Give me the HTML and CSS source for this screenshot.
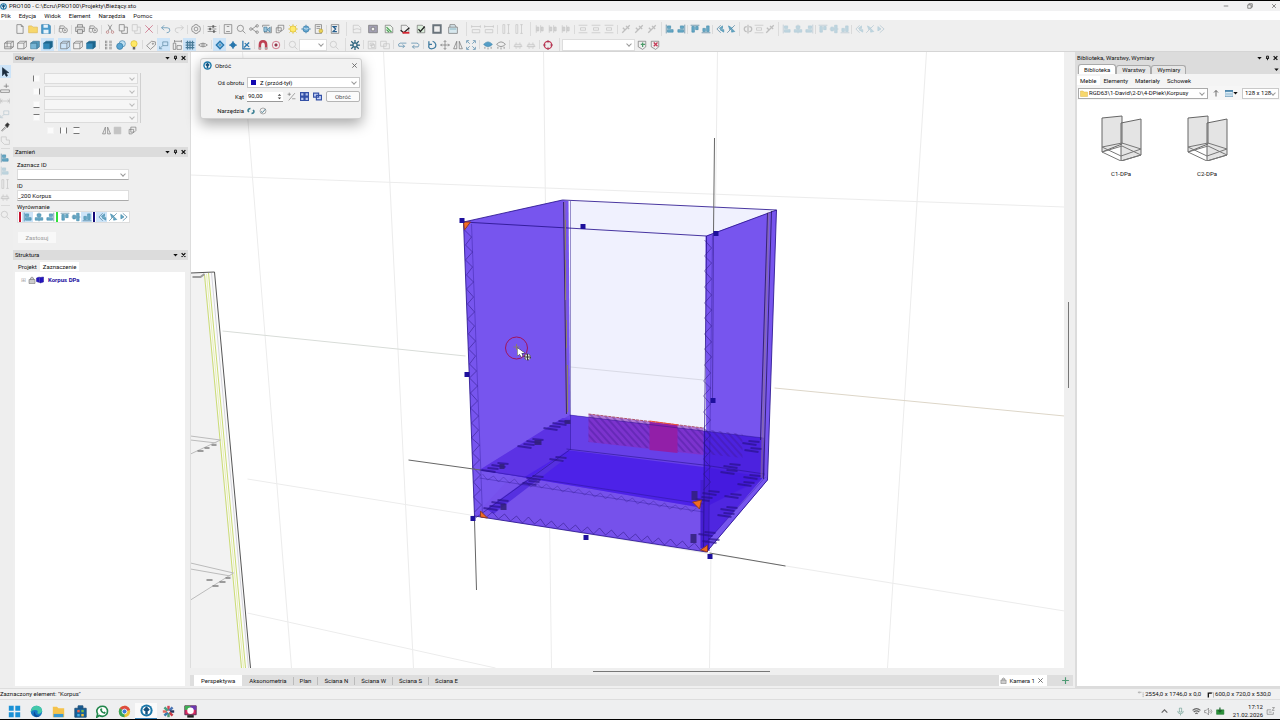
FILE: index.html
```html
<!DOCTYPE html>
<html lang="pl">
<head>
    <meta charset="UTF-8">
    <meta name="viewport" content="width=device-width, initial-scale=1.0">
    <title>PRO100 - C:\Ecru\PRO100\Projekty\Bieżący.sto</title>
    <link rel="stylesheet" href="styles.css">
</head>
<body>
    <header class="titlebar">
        <span data-icon="logo" class="app-icon"></span>
        <span class="title">PRO100 - C:\Ecru\PRO100\Projekty\Bieżący.sto</span>
        <button class="win-btn" aria-label="Minimalizuj" data-icon="minimize"></button>
        <button class="win-btn" aria-label="Przywróć" data-icon="restore"></button>
        <button class="win-btn" aria-label="Zamknij" data-icon="close"></button>
    </header>

    <nav class="menu">
        <button>Plik</button><button>Edycja</button><button>Widok</button><button>Element</button><button>Narzędzia</button><button>Pomoc</button>
    </nav>

    <section class="toolbars">
        <div class="toolbar-row" id="row1"></div>
        <div class="toolbar-row" id="row2"></div>
    </section>

    <main class="workspace">
        <aside class="rail" id="rail"></aside>

        <aside class="dock">
            <section class="panel">
                <div class="panel-head"><h2>Okleiny</h2><button aria-label="Opcje Okleiny" data-icon="down"></button><button aria-label="Przypnij Okleiny" data-icon="pin"></button><button aria-label="Zamknij Okleiny" data-icon="closeBold"></button></div>
                <div class="veneers">
                    <div class="veneer-list">
                        <label class="veneer"><span class="edge edge-left"></span><span class="select"><select disabled aria-label="Okleina lewa"><option></option></select></span></label>
                        <label class="veneer"><span class="edge edge-right"></span><span class="select"><select disabled aria-label="Okleina prawa"><option></option></select></span></label>
                        <label class="veneer"><span class="edge edge-bottom"></span><span class="select"><select disabled aria-label="Okleina dolna"><option></option></select></span></label>
                        <label class="veneer"><span class="edge edge-top"></span><span class="select"><select disabled aria-label="Okleina górna"><option></option></select></span></label>
                    </div>
                    <div class="veneer-tools">
                        <button aria-label="Bez oklein"><span class="edge"></span></button>
                        <button aria-label="Boki"><span class="edge edge-left edge-right"></span></button>
                        <button aria-label="Góra i dół"><span class="edge edge-top edge-bottom"></span></button>
                        <button class="push" aria-label="Odbij" data-icon="mirror"></button>
                        <button class="off" aria-label="Wypełnij" data-icon="fill"></button>
                        <button class="last" aria-label="Kopiuj" data-icon="copies"></button>
                    </div>
                </div>
            </section>

            <section class="panel">
                <div class="panel-head"><h2>Zamień</h2><button aria-label="Opcje Zamień" data-icon="down"></button><button aria-label="Przypnij Zamień" data-icon="pin"></button><button aria-label="Zamknij Zamień" data-icon="closeBold"></button></div>
                <form class="replace">
                    <label for="selectId">Zaznacz ID</label>
                    <span class="select"><select id="selectId"><option></option></select></span>
                    <label for="elementId">ID</label>
                    <input type="text" id="elementId" value="_200 Korpus">
                    <span class="label">Wyrównanie</span>
                    <div class="align" id="align"></div>
                    <button type="button" class="apply" disabled>Zastosuj</button>
                </form>
            </section>

            <section class="panel structure">
                <div class="panel-head"><h2>Struktura</h2><button aria-label="Opcje Struktura" data-icon="down"></button><button aria-label="Zamknij Struktura" data-icon="closeBold"></button></div>
                <div class="small-tabs"><button>Projekt</button><button class="active">Zaznaczenie</button></div>
                <ul class="tree">
                    <li><span class="expander">⊞</span><span data-icon="lock"></span><span data-icon="cabinet"></span><a href="#korpus">Korpus DPa</a></li>
                </ul>
            </section>
        </aside>

        <section class="view">
            <div class="stage">
                <svg class="scene" viewBox="190 52 874 616" preserveAspectRatio="xMidYMid slice" role="img" aria-label="Perspektywa">
                    <defs>
                        <pattern id="hatch" width="5" height="5" patternUnits="userSpaceOnUse" patternTransform="rotate(-42)">
                            <path d="M1 0V5" stroke="#3f1590" stroke-width="1"/>
                        </pattern>
                    </defs>

                    <!-- floor and wall grid -->
                    <g fill="none" stroke="#ececec" stroke-width="1">
                        <path d="M190 175L1064 207M247 479L1064 611M247 613L495 668"/>
                        <path d="M242 52L291 668M383 52L413 668M543 52L551 668M717 52L709 668M926 52L887 668"/>
                        <path d="M222 331L465 356" stroke="#d8dcd8"/>
                        <path d="M774 388L1064 416" stroke="#ddd6c8"/>
                    </g>

                    <!-- neighbouring cabinet -->
                    <path d="M190 273L205 273L242 668H190Z" fill="#f2f2f2"/>
                    <path d="M205 273L214 272L250 668H242Z" fill="#fafafa"/>
                    <g fill="none" stroke-width="1">
                        <path d="M204 275L241 668M208 273L245 668" stroke="#cbdc74"/>
                        <path d="M206 274L243 668" stroke="#e9efb5"/>
                        <path d="M211 273L248 668" stroke="#d5d5dc"/>
                        <path d="M190 273L214 272L250 668" stroke="#555"/>
                        <path d="M190 436L220 440L190 454M190 440L216 443M190 563L233 573L190 600M190 569L230 576" stroke="#bbb"/>
                    </g>
                    <path d="M192 277h8l4-3M197 451h6M204 448h5M211 445h5M206 580h6M212 586h6M219 582h6M225 578h5" stroke="#777" stroke-width="2" fill="none" opacity=".7"/>

                    <!-- back wall -->
                    <path d="M567 201L775 210L706 236L703 432L569 415Z" fill="#f0f1fe"/>
                    <path d="M570 367L703 380" stroke="#d9dae6" fill="none"/>

                    <!-- side walls -->
                    <path d="M463 222L562 200L568 201L570 450L474 516Z" fill="#7755ee"/>
                    <path d="M705 236L776 210L767 480L706 552Z" fill="#7755ee"/>

                    <!-- bottom and shelf -->
                    <path d="M569 415L703 431L765 440L767 480L706 552L474 516Z" fill="#7651eb"/>
                    <path d="M569 415L763 438L762 480L703 508L479 470Z" fill="#6740e8"/>
                    <path d="M566 450L703 467L764 477L703 508L479 470Z" fill="#4d22e8"/>
                    <path d="M479 470L562 418L570 419L570 449L524 477Z" fill="#5c32e4"/>
                    <path d="M486 509L559 456L567 457L493 514Z" fill="#5630e0"/>
                    <path d="M703 431L763 438L764 477L725 525L703 548Z" fill="#4318dc" opacity=".75"/>
                    <path d="M767 480L706 552L706 543L764 476Z" fill="#7655ee"/>
                    <path d="M700 480H709V551L700 548Z" fill="#451dd2"/>

                    <!-- plinth -->
                    <path d="M588 414L703 428L703 455L588 442Z" fill="#8a2cbc" opacity=".6"/>
                    <path d="M588 414L742 434V458L588 442Z" fill="url(#hatch)" opacity=".7"/>
                    <path d="M649 422L677 425V453L649 450Z" fill="#921fa8"/>
                    <path d="M588 414L703 428" stroke="#ae566b" fill="none" stroke-dasharray="3 1"/>
                    <path d="M649 421L678 425" stroke="#f0503c" fill="none"/>

                    <g fill="none" stroke="#29148f" stroke-width="1">
                        <path d="M463 222L562 200L776 210L767 480L706 552L474 516ZM463 222L706 236L776 210M706 236L703 550" opacity=".85"/>
                        <path d="M569 415L763 438M479 470L703 504M570 201L570 450" opacity=".45"/>
                        <path d="M566 449L703 465L764 474M475 518L569 450" opacity=".6"/>
                        <path d="M471 224L482 515M712 235L708 549M705 543L765 477M703 512L479 478" opacity=".35"/>
                    </g>
                    <g fill="none">
                        <path d="M564 202L566 414M768 212L761 478" stroke="#8c7196" stroke-width="2" opacity=".6"/>
                        <path d="M563 202L566 414M771 211L763 479M767 213L760 440" stroke="#25165c" opacity=".8"/>
                        <path d="M565 220V250M565 260V300M566 320V348M567 365V412" stroke="#8d8069"/>
                    </g>
                    <g id="edges" fill="none" stroke="#29157c" stroke-width="1"></g>

                    <g id="bolts"></g>

                    <path d="M463 222h7l-6 8zM692 502l9-2-2 9zM480 511l7 7-7-1zM707 545v7l-7-2z" fill="#f36b21" stroke="#8a3b2c" stroke-width="1"/>
                    <path d="M714 138L713 233M408 460L480 470M474 520L476 590M709 553L785 566" stroke="#666" fill="none"/>
                    <path d="M713 233L712 400" stroke="#29157c" opacity=".5" fill="none"/>
                    <g id="handles" fill="#1e109c"></g>

                    <!-- rotation centre and pointer -->
                    <circle cx="516" cy="348" r="11" fill="none" stroke="#a0145c"/>
                    <path d="M513 347h6M516 344v6" stroke="#8a7a70" fill="none"/>
                    <path d="M517 348v8l2-2 2 3 1-1-1-3h3z" fill="#fff" stroke="#333" stroke-width="1" paint-order="stroke"/>
                    <circle cx="527" cy="357" r="3" fill="#ddd" stroke="#444" stroke-dasharray="2 1"/>
                    <path d="M524 357h6M527 354v6" stroke="#333"/>
                </svg>
            </div>
            <div class="vtrack"><div class="vthumb"></div></div>
            <div class="htrack"><div class="hthumb"></div></div>
            <div class="view-tabs">
                <button class="active">Perspektywa</button>
                <button>Aksonometria</button>
                <button>Plan</button>
                <button>Ściana N</button>
                <button>Ściana W</button>
                <button>Ściana S</button>
                <button>Ściana E</button>
                <button class="camera"><span data-icon="lock"></span>Kamera 1<span data-icon="close"></span></button>
                <button class="add" aria-label="Dodaj kamerę" data-icon="plus"></button>
            </div>

            <form class="dialog" role="dialog" aria-labelledby="rotateTitle">
                <div class="dialog-head"><span data-icon="logo"></span><h2 id="rotateTitle">Obróć</h2><button type="button" aria-label="Zamknij okno" data-icon="close"></button></div>
                <div class="dialog-grid">
                    <label for="axis">Oś obrotu</label>
                    <span class="select axis"><i class="swatch"></i><select id="axis"><option>Z (przód-tył)</option></select></span>
                    <label for="angle">Kąt</label>
                    <div class="angle-row">
                        <span class="spin"><input type="text" id="angle" value="90,00"><span data-icon="spinner"></span></span>
                        <button type="button" aria-label="Zmień znak" data-icon="plusminus"></button>
                        <button type="button" aria-label="Siatka obrotu" data-icon="blueGrid"></button>
                        <button type="button" aria-label="Obróć kopię" data-icon="blueCopy"></button>
                        <button type="button" class="rotate">Obróć</button>
                    </div>
                    <span class="label">Narzędzia</span>
                    <div class="tool-row">
                        <button type="button" aria-label="Obrót wokół punktu" data-icon="cycle"></button>
                        <button type="button" aria-label="Wskaż kąt" data-icon="dial"></button>
                    </div>
                </div>
            </form>
        </section>

        <aside class="library">
            <div class="panel-head"><h2>Biblioteka, Warstwy, Wymiary</h2><button aria-label="Opcje biblioteki" data-icon="down"></button><button aria-label="Przypnij bibliotekę" data-icon="pin"></button><button aria-label="Zamknij bibliotekę" data-icon="closeBold"></button></div>
            <div class="folder-tabs"><button class="active">Biblioteka</button><button>Warstwy</button><button>Wymiary</button><span data-icon="down"></span></div>
            <div class="library-body">
                <div class="small-tabs"><button class="active">Meble</button><button>Elementy</button><button>Materiały</button><button>Schowek</button></div>
                <div class="path-row">
                    <span class="select path"><span data-icon="folder"></span><select aria-label="Folder"><option>RGD63\1-David\2-D\4-DPiek\Korpusy</option></select></span>
                    <button aria-label="W górę" data-icon="up"></button>
                    <button class="wide" aria-label="Widok listy"><span data-icon="table"></span><span data-icon="down"></span></button>
                    <span class="select size"><select aria-label="Rozmiar"><option>128 x 128</option></select></span>
                </div>
                <div class="items">
                    <figure><svg viewBox="0 0 42 46"><use href="#carcass"/></svg><figcaption>C1-DPa</figcaption></figure>
                    <figure><svg viewBox="0 0 42 46"><use href="#carcass"/></svg><figcaption>C2-DPa</figcaption></figure>
                </div>
            </div>
        </aside>
    </main>

    <footer class="status">
        <span>Zaznaczony element: "Korpus"</span>
        <span class="coords"><span data-icon="origin"></span>2554,0 x 1746,0 x 0,0</span>
        <span class="dims"><span data-icon="size"></span>600,0 x 720,0 x 530,0</span>
    </footer>

    <nav class="taskbar">
        <div class="apps" id="apps"></div>
        <div class="tray">
            <button aria-label="Ukryte ikony" data-icon="chevronUp"></button>
            <button aria-label="Mikrofon" data-icon="mic"></button>
            <button aria-label="Sieć" data-icon="wifi"></button>
            <button aria-label="Głośność" data-icon="sound"></button>
            <button aria-label="Bateria" data-icon="battery"></button>
            <time class="clock">17:12<br>21.02.2026</time>
            <button aria-label="Powiadomienia" data-icon="bell"></button>
        </div>
    </nav>

    <svg class="defs" aria-hidden="true">
        <symbol id="carcass" viewBox="0 0 42 46">
            <path d="M2 3L22 1V29L2 37ZM21 8L41 4V40L21 46Z" fill="#e4e4e4" stroke="#666"/>
            <path d="M2 32L22 28L41 34L21 41ZM2 37L21 46L41 40M2 37L22 31L41 40" fill="none" stroke="#777"/>
        </symbol>
    </svg>
    <script src="app.js"></script>
</body>
</html>
```
FILE: styles.css
```css
* {
    box-sizing: border-box;
}
body {
    margin: 0;
    height: 100vh;
    display: flex;
    flex-direction: column;
    overflow: hidden;
    border-top: 1px solid #000;
    border-bottom: 1px solid #000;
    background: #efefef;
    color: #111;
    font: 6px/8px Roboto, "Noto Sans", sans-serif;
}
button, input, select {
    font: inherit;
    color: inherit;
    border: 0;
    padding: 0;
    margin: 0;
    background: none;
    border-radius: 0;
}
button {
    display: inline-flex;
    align-items: center;
    justify-content: center;
    white-space: nowrap;
}
h2 {
    margin: 0;
    font-size: 6px;
    font-weight: 400;
}
svg {
    display: block;
}
[data-icon] {
    display: inline-flex;
    align-items: center;
    justify-content: center;
    flex: none;
}
[data-icon] > svg {
    width: 9px;
    height: 9px;
}
.defs {
    position: absolute;
    width: 0;
    height: 0;
}

/* window chrome */
.titlebar {
    height: 10px;
    flex: none;
    display: flex;
    align-items: center;
    background: #f1f1f2;
}
.app-icon > svg {
    width: 7px;
    height: 7px;
}
.title {
    flex: 1;
    padding-left: 2px;
}
.win-btn {
    width: 24px;
}
.win-btn > svg {
    width: 6px;
    height: 6px;
}
.win-btn:last-child {
    margin-right: -6px;
}
.menu {
    height: 9px;
    flex: none;
    display: flex;
    gap: 8px;
    padding-left: 1px;
    background: #fff;
}
.toolbars {
    height: 32px;
    flex: none;
    border-bottom: 1px solid #d5d5d5;
    padding-top: 2px;
}
.toolbar-row {
    display: flex;
    height: 14px;
    margin-bottom: 2px;
}
#row1 {
    padding-left: 13px;
}
#row2 {
    padding-left: 2px;
    height: 13px;
}
.bar {
    display: flex;
    align-items: center;
}
.bar + .bar {
    margin-left: 5px;
    padding-left: 2px;
    border-left: 1px solid #dcdcdc;
}
.bar + .tight {
    margin-left: 3px;
}
.tool {
    width: 13px;
    height: 13px;
}
.tool > svg {
    width: 10px;
    height: 10px;
}
.roomy .tool {
    width: 16px;
}
.tight .tool {
    width: 11px;
}
.on {
    background: #cde4f8;
}
.off {
    opacity: .35;
}
.sep {
    width: 1px;
    height: 9px;
    margin: 0 1px;
    background: #dadada;
}
.sep.wide {
    margin: 0 1px 0 2px;
}

/* drop-downs */
.select {
    position: relative;
    display: flex;
    align-items: center;
    min-width: 0;
    background: #fff;
    border: 1px solid #c9c9c9;
}
.select select {
    appearance: none;
    flex: 1;
    min-width: 0;
    width: 100%;
    height: 9px;
    padding-left: 2px;
    outline: 0;
}
.select::after {
    content: "";
    position: absolute;
    right: 3px;
    top: 2px;
    width: 3px;
    height: 3px;
    border-right: 1px solid #999;
    border-bottom: 1px solid #999;
    transform: rotate(45deg);
}
.toolbar-row .select {
    height: 12px;
    width: 28px;
    border-color: #ddd;
}
.toolbar-row .select.long {
    width: 73px;
}

/* work area */
.workspace {
    flex: 1;
    min-height: 0;
    display: flex;
}
.rail {
    width: 13px;
    flex: none;
    display: flex;
    flex-direction: column;
    padding-top: 13px;
    background: #eee;
}
.rail .tool {
    width: 12px;
    margin-left: -1px;
}
.rail .tool:first-child {
    margin-bottom: 3px;
}
.rail .sep {
    width: 9px;
    height: 1px;
    margin: 2px 1px;
}
.dock {
    width: 175px;
    flex: none;
    display: flex;
    flex-direction: column;
    gap: 4px;
    padding: 1px 0 2px;
}
.panel-head {
    display: flex;
    align-items: center;
    height: 10px;
    padding: 0 1px 0 2px;
    background: #dcdcdc;
}
.panel-head h2 {
    flex: 1;
}
.panel-head button {
    width: 8px;
}
.panel-head svg {
    width: 5px;
    height: 6px;
}
.veneers {
    height: 80px;
    padding: 10px 0 0 20px;
}
.veneer-list {
    display: flex;
    flex-direction: column;
    gap: 2px;
    width: 108px;
    border-right: 1px solid #d0d0d0;
}
.veneer {
    display: flex;
    align-items: center;
    gap: 4px;
}
.veneer .select {
    width: 94px;
    background: #f6f6f6;
    border-color: #dcdcdc;
}
.veneer .select::after {
    border-color: #bbb;
}
.edge {
    width: 7px;
    height: 7px;
    background: #fbfbfb;
    border: 1px solid #f4f4f4;
}
.edge-left {
    border-left-color: #777;
}
.edge-right {
    border-right-color: #777;
}
.edge-top {
    border-top-color: #777;
}
.edge-bottom {
    border-bottom-color: #777;
}
.veneer-tools {
    display: flex;
    align-items: center;
    padding: 3px 0 0 11px;
}
.veneer-tools button {
    width: 13px;
}
.veneer-tools .push {
    margin-left: 18px;
    width: 10px;
}
.veneer-tools .last {
    margin-left: 2px;
}
.replace {
    display: flex;
    flex-direction: column;
    align-items: flex-start;
    height: 89px;
    padding: 3px 4px;
}
.replace label, .replace .label {
    height: 9px;
    line-height: 9px;
}
.replace .select, .replace input {
    width: 112px;
    height: 11px;
    margin-bottom: 1px;
    border: 1px solid #ddd;
    border-bottom-color: #aaa;
    background: #fff;
}
.align {
    display: flex;
    align-items: center;
    height: 12px;
    background: #fff;
    border: 1px solid #ddd;
}
.align .tool {
    width: 11px;
    height: 10px;
}
.align .mark {
    width: 2px;
    height: 10px;
    margin: 0 1px;
}
.mark.red {
    background: #c8102e;
}
.mark.green {
    background: #2fe03a;
}
.mark.navy {
    background: #140a7a;
}
.apply {
    width: 38px;
    height: 11px;
    margin: 9px 0 0 1px;
    background: #f8f8f8;
    color: #999;
}
.structure {
    flex: 1;
    display: flex;
    flex-direction: column;
}
.small-tabs {
    display: flex;
    height: 12px;
    padding: 2px 0 0 2px;
}
.small-tabs button {
    padding: 0 3px;
    height: 10px;
}
.small-tabs .active {
    background: #fff;
    height: 9px;
}
.tree {
    flex: 1;
    margin: 0 3px 0 2px;
    padding: 4px 0 0 6px;
    list-style: none;
    background: #fff;
}
.tree li {
    display: flex;
    align-items: center;
}
.tree li svg {
    width: 8px;
    height: 8px;
}
.tree a {
    padding-left: 4px;
    color: #1c0f9e;
    font-weight: 700;
    text-decoration: none;
}
.expander {
    width: 7px;
    color: #aaa;
}

/* 3D view */
.view {
    position: relative;
    flex: 1;
    min-width: 0;
    margin: 0 2px;
    display: grid;
    grid-template-columns: 1fr 9px;
    grid-template-rows: 1fr 7px 11px;
    padding-bottom: 2px;
}
.stage {
    min-height: 0;
    background: #fff;
    border-left: 1px solid #ddd;
    overflow: hidden;
}
.scene {
    width: 100%;
    height: 100%;
}
.vtrack, .htrack {
    display: flex;
    align-items: center;
    justify-content: center;
    background: #efefef;
}
.vthumb {
    width: 1px;
    height: 14%;
    margin-bottom: 30px;
    background: #777;
}
.htrack {
    grid-column: 1 / 3;
}
.hthumb {
    width: 20%;
    height: 1px;
    margin-left: 100px;
    background: #777;
}
.view-tabs {
    grid-column: 1 / 3;
    display: flex;
    align-items: center;
    padding-left: 4px;
    background: #dedede;
}
.view-tabs button {
    height: 8px;
    padding: 0 6px;
    border-left: 1px solid #bbb;
}
.view-tabs .active {
    height: 11px;
    padding: 0 7px;
    border: 0;
    background: #fff;
}
.view-tabs .active + button {
    border-color: transparent;
}
.view-tabs .camera {
    height: 11px;
    margin-left: auto;
    padding: 0 3px 0 1px;
    gap: 2px;
    border: 0;
    background: #fff;
}
.view-tabs .camera svg {
    width: 7px;
    height: 7px;
}
.view-tabs .add {
    margin: 0 3px 0 14px;
    padding: 0;
    border: 0;
}

/* rotate dialog */
.dialog {
    position: absolute;
    left: 10px;
    top: 6px;
    width: 162px;
    height: 61px;
    border-radius: 3px;
    background: #f2f2f2;
    border: 1px solid #cfcfcf;
    box-shadow: 0 5px 14px rgba(0, 0, 0, .35);
}
.dialog-head {
    display: flex;
    align-items: center;
    gap: 3px;
    height: 13px;
    padding: 0 3px 0 2px;
}
.dialog-head h2 {
    flex: 1;
}
.dialog-head button > svg {
    width: 7px;
    height: 7px;
}
.dialog-grid {
    display: grid;
    grid-template-columns: 43px 1fr;
    grid-auto-rows: 11px;
    gap: 3px 3px;
    align-items: center;
    padding: 5px 4px 0 0;
}
.dialog-grid label, .dialog-grid .label {
    text-align: right;
}
.axis {
    height: 11px;
}
.swatch {
    width: 5px;
    height: 5px;
    margin: 0 2px 0 3px;
    background: #1208b0;
}
.angle-row, .tool-row {
    display: flex;
    align-items: center;
    gap: 4px;
}
.angle-row {
    height: 11px;
}
.spin {
    display: flex;
    width: 36px;
    height: 10px;
    background: #fff;
    border-bottom: 1px solid #999;
}
.spin input {
    flex: 1;
    min-width: 0;
    padding-left: 1px;
}
.spin svg {
    width: 7px;
}
.rotate {
    width: 34px;
    height: 11px;
    margin-left: auto;
    border: 1px solid #b5b5b5;
    border-radius: 2px;
    background: #fbfbfb;
    color: #555;
}
.tool-row svg {
    width: 8px;
    height: 8px;
}

/* library */
.library {
    width: 205px;
    flex: none;
    display: flex;
    flex-direction: column;
    padding: 1px 0 2px;
    background: #dcdcdc;
}
.folder-tabs {
    display: flex;
    align-items: flex-end;
    height: 11px;
    padding: 0 1px 0 3px;
}
.folder-tabs button {
    height: 9px;
    padding: 0 5px;
    border: 1px solid #aaa;
    border-bottom: 0;
    border-radius: 3px 3px 0 0;
    background: #e6e6e6;
}
.folder-tabs .active {
    height: 10px;
    background: #fff;
}
.folder-tabs [data-icon] {
    margin-left: auto;
}
.folder-tabs svg {
    width: 5px;
}
.library-body {
    flex: 1;
    margin-left: 2px;
    background: #fff;
}
.library .small-tabs {
    padding-left: 0;
    background: #f4f4f4;
}
.library .small-tabs button {
    padding: 0 4px 0 3px;
}
.path-row {
    display: flex;
    align-items: center;
    gap: 4px;
    height: 14px;
    padding: 0 1px;
    background: #f6f6f6;
}
.path {
    width: 130px;
    height: 11px;
    padding-left: 1px;
    border-color: #aaa;
}
.path select {
    padding-left: 1px;
}
.path-row svg {
    width: 8px;
}
.path-row .wide {
    margin-left: 1px;
}
.path-row .wide [data-icon="down"] svg {
    width: 5px;
    height: 6px;
}
.size {
    flex: 1;
    height: 11px;
}
.items {
    display: grid;
    grid-template-columns: 86px 86px;
    padding-top: 15px;
}
.items figure {
    margin: 0;
    display: flex;
    flex-direction: column;
    align-items: center;
    gap: 9px;
    padding-left: 2px;
}
.items svg {
    width: 42px;
    height: 46px;
}

/* bottom bars */
.status {
    flex: none;
    display: flex;
    align-items: center;
    gap: 6px;
    height: 11px;
    padding-right: 9px;
    border-top: 1px solid #ddd;
    background: #f1f1f1;
}
.coords {
    margin-left: auto;
}
.coords, .dims {
    display: flex;
    align-items: center;
    gap: 1px;
}
.status svg {
    width: 7px;
    height: 7px;
}
.taskbar {
    flex: none;
    display: flex;
    justify-content: space-between;
    height: 20px;
    padding-left: 3px;
    border-top: 1px solid #ddd;
    background: #eeeff0;
}
.apps {
    display: flex;
    align-items: center;
    padding-top: 3px;
}
.apps button {
    width: 22px;
    height: 16px;
}
.apps .tool > svg {
    width: 13px;
    height: 13px;
}
.apps .current {
    background: #fafafa;
    border-bottom: 1px solid #3b82b5;
}
.tray {
    display: flex;
    align-items: center;
    gap: 3px;
    padding: 3px 5px 0 0;
}
.tray button:first-child, .tray button:nth-child(2) {
    margin-right: 4px;
}
.clock {
    width: 32px;
    margin-left: 3px;
    text-align: right;
}
```
FILE: app.js
```js
// 16x16 drawings, stroked in the current colour unless they say otherwise
const icons = {
    logo: '<circle cx="8" cy="8" r="7.5" fill="#1976a8" stroke="none"/><circle cx="8" cy="8" r="5" fill="#fff" stroke="none"/><path d="M8 13V7M5 8L8 5L11 8" stroke="#14527e" stroke-width="3"/>',
    minimize: '<path d="M2 8h12" stroke-width="2"/>',
    restore: '<path d="M2 5h9v9H2zM5 5V2h9v9h-3" stroke-width="2"/>',
    close: '<path d="M3 3l10 10M13 3L3 13" stroke-width="2"/>',
    closeBold: '<path d="M2 2l12 12M14 2L2 14" stroke="#111" stroke-width="4"/>',
    down: '<path d="M1 5h14l-7 8z" fill="#111" stroke="none"/>',
    pin: '<path d="M3 9h10M5 9V2h6v7M8 9v6" stroke="#111" stroke-width="3"/>',
    doc: '<path d="M3 1h7l3 3v11H3zM10 1v3h3"/>',
    folder: '<path d="M1 3h5l2 2h7v9H1z" fill="#f7d76c" stroke="#dcb44c"/>',
    save: '<path d="M1 1h12l2 2v12H1z" fill="#4b9ccc" stroke="#2678ac"/><path d="M4 1h7v5H4zM4 15V9h8v6" fill="#e7f3fb" stroke="none"/>',
    printPreview: '<path d="M3 7V3h6l2 2M2 13V7h7M3 13h3"/><circle cx="11" cy="10" r="4"/><circle cx="11" cy="10" r="1"/>',
    print: '<path d="M4 5V1h8v4M4 12H1V5h14v7h-3M4 9h8v6H4z" fill="#ddd"/>',
    scissors: '<path d="M5 1l6 10M11 1L5 11"/><circle cx="4" cy="13" r="2" stroke="#b36a6a"/><circle cx="12" cy="13" r="2" stroke="#b36a6a"/>',
    copy: '<path d="M2 1h8v10H2zM6 11v4h9V5h-5" />',
    cross: '<path d="M2 2l12 12M14 2L2 14" stroke="#c44e6c"/>',
    undo: '<path d="M5 2L1 6l4 4M1 6h9q5 0 4 5q-1 3-5 3" stroke="#3d7ea6"/>',
    redo: '<path d="M11 2l4 4-4 4M15 6H6q-5 0-4 5q1 3 5 3"/>',
    gear: '<path d="M6 1h4l1 2 3 1 1 4-1 4-3 1-1 2H6l-1-2-3-1-1-4 1-4 3-1z"/><circle cx="8" cy="8" r="3"/>',
    sliders: '<path d="M1 4h14M1 8h14M1 12h14"/><path d="M10 2v4M5 6v4M11 10v4" stroke-width="3"/>',
    book: '<path d="M2 1h12v14H2zM5 12h6M6 4h4"/>',
    zoom: '<circle cx="7" cy="7" r="5"/><path d="M11 11l4 4"/>',
    share: '<path d="M5 8l7-5M5 8l7 5"/><circle cx="3" cy="8" r="2"/><circle cx="13" cy="3" r="2"/><circle cx="13" cy="13" r="2"/>',
    photo: '<path d="M1 5V2h11M15 4v10H4v-3"/><path d="M3 12V5h5v7zM8 9l5-4v8z" fill="#9cc5dc" stroke="#387395"/>',
    copies: '<path d="M5 2h9v6l-3 3H5zM2 6h8v5l-3 3H2z"/>',
    sun: '<path d="M8 0v16M0 8h16M2 2l12 12M14 2L2 14" stroke="#d8bd38"/><circle cx="8" cy="8" r="5" fill="#ffea6d" stroke="#d7b620"/>',
    globe: '<path d="M0 8h16M8 1v14" stroke="#427fab"/><circle cx="8" cy="8" r="5" fill="#67a8d1" stroke="#286e9c"/><path d="M4 6q4 4 8 1" stroke="#fff"/>',
    report: '<path d="M2 1h10v14H2zM4 4h6M4 7h6"/><circle cx="11" cy="11" r="3" fill="#ead35a" stroke="#b99f35"/>',
    sum: '<path d="M2 1h12v14H2z"/><path d="M11 4H5l4 4-4 4h6" stroke="#265e8d" stroke-width="2"/>',
    sheet: '<path d="M2 14V2h8l4 4v8z"/><path d="M2 9q6-3 12 0"/>',
    sheetPhoto: '<path d="M1 2h14v12H1z" fill="#a3a0b3"/><circle cx="8" cy="8" r="3" fill="#eee"/>',
    sheetGreen: '<path d="M2 14V2h8l4 4v8z" fill="#eaf4e9"/><path d="M4 5l8 8M4 9l4 4" stroke="#48a052" stroke-width="2"/>',
    sheetRed: '<path d="M2 12V2h8l4 4v6"/><path d="M1 10l5 4 9-8" stroke="#222" stroke-width="2"/><path d="M4 14h11" stroke="#d52631" stroke-width="3"/>',
    sheetCheck: '<path d="M2 14V2h8l4 4v8z" fill="#dcefdc"/><path d="M4 8l3 4 7-8" stroke="#222" stroke-width="2"/>',
    square: '<path d="M2 2h12v12H2z" stroke-width="3" stroke="#69737b"/>',
    archive: '<path d="M1 5h14v10H1zM3 5V1h8l2 4" fill="#d8e8ee"/><path d="M3 8h10" stroke="#5797ab"/>',
    distH: '<path d="M1 2v4M15 2v4M1 4h14M2 9h12v5H2z"/>',
    distV: '<path d="M3 1v14h3V1zM12 1v14M10 1h4M10 15h4"/>',
    flow: '<path d="M2 2v12M9 2v12M3 5h3v6H3zM10 5h3v6h-3z" fill="#aaa"/>',
    stack: '<path d="M1 2h14M1 14h14M4 6h8v4H4z"/>',
    diag: '<path d="M2 14L14 2M3 6l4 4M8 3l5 5" stroke-width="2"/>',
    ring: '<path d="M8 1v14M6 4Q2 4 2 8t4 4M10 4q4 0 4 4t-4 4" stroke-width="2"/>',
    alL: '<path d="M2 1v14" stroke="#346f90"/><path d="M4 3h5v4H4zM4 9h9v4H4z" fill="#68a9c6" stroke="#438cad"/>',
    alC: '<path d="M8 1v14" stroke="#346f90"/><path d="M5 3h6v4H5zM2 9h12v4H2z" fill="#68a9c6" stroke="#438cad"/>',
    alR: '<path d="M14 1v14" stroke="#346f90"/><path d="M7 3h5v4H7zM3 9h9v4H3z" fill="#68a9c6" stroke="#438cad"/>',
    alT: '<path d="M1 2h14" stroke="#346f90"/><path d="M3 4h4v9H3zM9 4h4v5H9z" fill="#68a9c6" stroke="#438cad"/>',
    alM: '<path d="M1 8h14" stroke="#346f90"/><path d="M3 5h4v6H3zM9 2h4v12H9z" fill="#68a9c6" stroke="#438cad"/>',
    alB: '<path d="M1 14h14" stroke="#346f90"/><path d="M3 7h4v5H3zM9 3h4v9H9z" fill="#68a9c6" stroke="#438cad"/>',
    alF: '<path d="M9 2L3 8l6 6" stroke="#346f90"/><path d="M7 7l5-4v4zM8 9l6 4V9z" fill="#68a9c6" stroke="#438cad"/>',
    alX: '<path d="M2 14L14 2" stroke="#346f90"/><path d="M4 3l5 3-3 3zM9 7l5 5-5 1z" fill="#68a9c6" stroke="#438cad"/>',
    alK: '<path d="M6 2l7 6-7 6" stroke="#346f90"/><path d="M3 4l5 4-5 3z" fill="#68a9c6" stroke="#438cad"/>',
    wire: '<path d="M1 5h10v9H1zM1 5l4-3h10v9l-4 3M11 5l4-3M5 2v9H1M5 11h10"/>',
    box: '<path d="M1 5h10v9H1zM1 5l4-3h10v9l-4 3M11 5l4-3"/>',
    boxBlue: '<path d="M1 5h10v9H1z" fill="#79b6d5" stroke="#42809f"/><path d="M1 5l4-3h10v9l-4 3V5z" fill="#529abd" stroke="#3f718d"/>',
    boxFull: '<path d="M1 5h10v9H1z" fill="#3187b6" stroke="#2477a4"/><path d="M1 5l4-3h10v9l-4 3V5z" fill="#19658f" stroke="#26688c"/>',
    edges: '<path d="M4 1v14M6 1v14M11 1v14M13 1v14" stroke-dasharray="4 1"/>',
    spheres: '<circle cx="10" cy="6" r="5" fill="#bedff1" stroke="#397fac"/><circle cx="6" cy="10" r="5" fill="#5aa4d1" stroke="#25729f"/>',
    bulb: '<circle cx="8" cy="6" r="5" fill="#ffe866" stroke="#d7b825"/><path d="M6 12h4M6 14h4" stroke-width="2"/>',
    tag: '<path d="M1 9l8-7 6 1v5l-8 7z"/><circle cx="11" cy="6" r="1"/>',
    dims: '<path d="M1 14l5-5M1 10v4h4M6 3h8v6H6z" stroke="#507d98"/>',
    measures: '<path d="M2 15V5h4v10zM8 9h7v6H8zM4 2h11M4 0v4M15 0v4"/>',
    grid: '<path d="M1 4h14M1 8h14M1 12h14M4 1v14M8 1v14M12 1v14" stroke="#4a7c99" stroke-width="2"/>',
    eye: '<path d="M1 8q7-6 14 0q-7 6-14 0z"/><circle cx="8" cy="8" r="2"/>',
    diamond: '<path d="M8 2l6 6-6 6-6-6z" fill="#7dbde8" stroke="#2876ad" stroke-width="2"/><circle cx="8" cy="8" r="1" fill="#fff"/>',
    diamond2: '<path d="M8 2v12M2 8h12M8 4l4 4-4 4-4-4z" stroke="#2876ad" stroke-width="2"/>',
    origin3: '<path d="M3 1v13h12M5 12l8-8M6 5l7 6" stroke="#2876ad" stroke-width="2"/>',
    magnet: '<path d="M3 15V8q0-6 5-6t5 6v7" stroke="#bd4053" stroke-width="4"/><path d="M1 13h4M11 13h4" stroke="#aaa" stroke-width="3"/>',
    target: '<circle cx="8" cy="8" r="6" stroke="#c33855"/><circle cx="8" cy="8" r="2" fill="#923448" stroke="#923448"/>',
    crosshair: '<circle cx="8" cy="8" r="6" stroke="#c33855" stroke-width="2"/><path d="M8 0v5M8 11v5M0 8h5M11 8h5" stroke="#8b2845"/>',
    selectAll: '<path d="M2 2l3 3M14 2l-3 3M2 14l3-3M14 14l-3-3M8 0v4M8 12v4M0 8h4M12 8h4M5 5h6v6H5z" stroke="#28617c" stroke-width="2"/>',
    group: '<path d="M2 2h12v12H2zM5 5h5v4H5zM7 7h5v5H7z"/>',
    ungroup: '<path d="M1 2h9v8H1zM6 6h9v8H6z"/>',
    turnL: '<path d="M15 5H5q-4 1-2 5h9M9 7l3 3-3 3" stroke="#3c799f"/>',
    turnR: '<path d="M2 5h9q5 1 2 6H4M7 8l-3 3 3 3" stroke="#3c799f"/>',
    rotate: '<path d="M3 2v5h5M4 6q-4 8 4 8q7-1 6-7q-1-4-5-5" stroke="#3c799f" stroke-width="2"/>',
    move: '<path d="M8 1v14M1 8h14M6 3l2-2 2 2M6 13l2 2 2-2M3 6L1 8l2 2M13 6l2 2-2 2"/>',
    mirror: '<path d="M6 2v12H1zM10 2v12h5z"/>',
    scale: '<path d="M1 5V1h4M11 1h4v4M15 11v4h-4M5 15H1v-4M2 2l4 4M14 2l-4 4M2 14l4-4M14 14l-4-4" stroke="#3c799f"/>',
    eyeBlue: '<path d="M1 7q7-8 14 0q-7 7-14 0z" fill="#549dc6" stroke="#3b83ab"/><path d="M3 11v3M8 12v3M13 11v3"/>',
    eyeShut: '<path d="M1 7q7-8 14 0q-7 7-14 0zM3 11v3M8 12v3M13 11v3"/>',
    lamp: '<path d="M3 7h10v4H3zM5 7V4M11 7V4M1 10h14M5 12v2M11 12v2"/>',
    camAdd: '<path d="M2 2h12v9l-5 4-7-4z"/><path d="M6 7h7M9 4v7" stroke="#4c9b69" stroke-width="2"/>',
    camDel: '<path d="M2 2h12v9l-5 4-7-4z"/><path d="M6 4l6 6M12 4l-6 6" stroke="#c53855" stroke-width="2"/>',
    arrow: '<path d="M4 1v13l3-4 3 5 2-1-2-5h4z" fill="#1b2c3d" stroke="#1b2c3d"/>',
    insert: '<path d="M1 11h14v4H1zM10 1v7M6 5h8"/>',
    span: '<path d="M1 4v8M15 4v8M1 8h14M4 6L1 8l3 2M12 6l3 2-3 2"/>',
    picker: '<path d="M2 14l7-7M3 15l8-7"/><path d="M8 5l4 4 3-5-3-3z" fill="#333"/>',
    shape: '<path d="M2 3h8v5h5v7H7l-5-5z"/>',
    fill: '<path d="M2 2h12v12H2z" fill="#777"/>',
    lock: '<path d="M2 7h12v8H2zM5 7V4q3-4 6 0v3" fill="#ccc"/>',
    cabinet: '<path d="M1 4l6-2v11l-6-2zM8 3l7-1v10l-7 2z" fill="#2415c0" stroke="#1d1092"/>',
    plus: '<path d="M8 2v12M2 8h12" stroke="#4e9a74" stroke-width="2"/>',
    spinner: '<path d="M4 6l4-4 4 4zM4 10l4 4 4-4z" fill="#444" stroke="none"/>',
    plusminus: '<path d="M1 4h6M4 1v6M14 2L3 15M9 12h6"/>',
    blueGrid: '<path d="M1 1h6v6H1zM9 1h6v6H9zM1 9h6v6H1zM9 9h6v6H9z" fill="#b9c6ee" stroke="#3451a6" stroke-width="2"/>',
    blueCopy: '<path d="M1 2h9v7H1zM6 6h9v8H6z" fill="#c9d6fa" stroke="#3451a6" stroke-width="2"/>',
    cycle: '<path d="M7 3Q2 3 2 8l2 2M9 13q5 0 5-5l-2-2" stroke="#3c8094" stroke-width="3"/>',
    dial: '<circle cx="8" cy="8" r="6"/><path d="M4 9l3 2 6-7" stroke="#578798" stroke-width="2"/>',
    up: '<path d="M8 14V2M4 6l4-4 4 4" stroke-width="2"/>',
    table: '<path d="M0 2h16v12H0z" fill="#dcedf7" stroke="#3978a3"/><path d="M0 3h16" stroke="#3978a3" stroke-width="3"/><path d="M4 7v5M8 7v5M12 7v5" stroke="#3978a3"/>',
    origin: '<path d="M2 3h9M14 3v12M5 1v5" stroke-dasharray="3 1"/>',
    size: '<path d="M5 4h10v11"/><path d="M3 15V5h8" stroke="#111" stroke-width="3"/>',
    chevronUp: '<path d="M3 10l5-5 5 5" stroke-width="2"/>',
    mic: '<path d="M6 2h4v7H6zM3 7q0 5 5 5t5-5M8 12v3" stroke="#579083"/>',
    wifi: '<path d="M1 6q7-6 14 0M3 9q5-4 10 0M6 12q2-2 4 0" stroke-width="2"/>',
    sound: '<path d="M1 6h3l4-4v12l-4-4H1zM10 6q2 2 0 4M12 4q4 4 0 8"/>',
    battery: '<path d="M1 5h13v8H1z" fill="#2c923a" stroke="#227832"/><path d="M7 1v8M4 6l3 3 3-3" stroke="#195d29" stroke-width="2"/>',
    bell: '<path d="M2 13V5h7M2 13h11V9M5 9h5M11 1h4l-4 5h4"/>',
    windows: '<path d="M1 1h6v6H1zM9 1h6v6H9zM1 9h6v6H1zM9 9h6v6H9z" fill="#1b91d5" stroke="none"/>',
    edge: '<circle cx="8" cy="8" r="7" fill="#1779c5" stroke="none"/><path d="M1 7Q3 0 9 1q6 1 6 7q-2 4-6 2q2-4-3-4-4 0-5 3z" fill="#42c8a9" stroke="none"/><path d="M6 8q0 6 7 5q-3 3-7 1Q3 11 6 8z" fill="#0b4e99" stroke="none"/>',
    explorer: '<path d="M1 2h5l2 2h7v11H1z" fill="#f5c34c" stroke="none"/><path d="M2 11h12v4H2z" fill="#3b99d4" stroke="none"/>',
    store: '<path d="M1 4h14v11H1zM5 4V1h6v3" fill="#15609a" stroke="#204d75"/><path d="M4 6h3v3H4z" fill="#ef6248" stroke="none"/><path d="M9 6h3v3H9z" fill="#83b943" stroke="none"/><path d="M4 11h3v3H4z" fill="#42aee4" stroke="none"/><path d="M9 11h3v3H9z" fill="#f3bd36" stroke="none"/>',
    whatsapp: '<path d="M1 15l1-4q-3-6 3-9 7-2 9 4 1 7-6 8-2 0-4-1z" fill="#fff" stroke="#21864c" stroke-width="2"/><path d="M5 5q0 5 6 6l1-2-2-1-1 1-2-3 1-1-1-1z" fill="#21864c" stroke="none"/>',
    chrome: '<circle cx="8" cy="8" r="7" fill="#e9c43a" stroke="none"/><path d="M8 8L2 4Q5 0 10 1q4 2 5 5z" fill="#dd4b3f" stroke="none"/><path d="M8 8l0 7Q1 15 1 8q0-2 1-4z" fill="#37a35a" stroke="none"/><circle cx="8" cy="8" r="3" fill="#3b7ddc" stroke="#fff"/>',
    pinwheel: '<g stroke-width="3"><path d="M8 7V1" stroke="#d14453"/><path d="M9 7l4-4" stroke="#4974b3"/><path d="M10 8h5" stroke="#26345c"/><path d="M9 9l4 4" stroke="#c83b45"/><path d="M8 10v5" stroke="#509777"/><path d="M7 9l-4 4" stroke="#3579aa"/><path d="M6 8H1" stroke="#e06c61"/><path d="M7 7L3 3" stroke="#47a080"/></g>',
    recorder: '<path d="M1 1h14v11H1z" fill="#d72b62" stroke="#432146"/><path d="M1 1h7v5H1z" fill="#3daf54" stroke="none"/><path d="M8 1h7v5H8z" fill="#6b38b0" stroke="none"/><circle cx="8" cy="7" r="4" fill="#fff" stroke="none"/><path d="M4 14h8" stroke="#222" stroke-width="3"/>'
};

function drawIcon(name) {
    return '<svg viewBox="0 0 16 16" fill="none" stroke="#666" aria-hidden="true">' + icons[name] + '</svg>';
}

function addButton(parent, name, className) {
    const b = document.createElement('button');
    b.type = 'button';
    b.className = 'tool ' + className;
    b.setAttribute('aria-label', name);
    b.innerHTML = drawIcon(name);
    parent.appendChild(b);
}

// "|" and "||" are separators, "+" marks a pressed tool, "-" a disabled one
function fillBar(parent, list) {
    list.split(' ').forEach(item => {
        if (item[0] === '|') {
            const s = document.createElement('span');
            s.className = item === '||' ? 'sep wide' : 'sep';
            parent.appendChild(s);
        } else if (item[0] === '[') {
            const s = document.createElement('span');
            s.className = item === '[long]' ? 'select long' : 'select';
            s.innerHTML = '<select aria-label="' + (item === '[long]' ? 'Kamera' : 'Powiększenie') + '"><option></option></select>';
            parent.appendChild(s);
        } else if (item[0] === '#') {
            const s = document.createElement('span');
            s.className = 'mark ' + item.slice(1);
            parent.appendChild(s);
        } else {
            const state = item[0] === '+' ? 'on' : item[0] === '-' ? 'off' : '';
            addButton(parent, item.replace(/^[+-]/, ''), state);
        }
    });
}

function addBar(rowId, list, className) {
    const bar = document.createElement('div');
    bar.className = 'bar ' + (className || '');
    fillBar(bar, list);
    document.getElementById(rowId).appendChild(bar);
}

addBar('row1', 'doc folder save || printPreview || print printPreview || scissors copy -copy cross || undo -redo || gear | sliders | book zoom share photo copies sun globe report | sum');
addBar('row1', '-sheet sheetPhoto sheetGreen sheetRed sheetCheck square archive', 'roomy');
addBar('row1', '-distH -distH || -distV -distV');
addBar('row1', '-flow -flow -flow || -stack -stack -stack || -diag -diag -diag');
addBar('row1', 'alL alR | alT alB | alF alX', 'tight');
addBar('row1', '-ring -stack -diag', 'tight');
addBar('row1', '-alL -alC -alR | -alT -alM -alB | -alF -alX -alK', 'tight');

addBar('row2', 'wire box boxBlue +boxFull || +box box boxFull || edges spheres bulb || tag +dims measures +grid eye || +diamond diamond2 origin3 || magnet target || -zoom [short] -zoom');
addBar('row2', 'selectAll || -group -ungroup || turnL turnR || rotate move mirror scale || eyeBlue eyeShut || -lamp -lamp || crosshair');
addBar('row2', '[long] camAdd camDel');

fillBar(document.getElementById('rail'), '+arrow insert -span -dims picker -shape | alL -alL -distV -lamp | -zoom');
fillBar(document.getElementById('align'), '#red +alL alC alR #green alT alM +alB #navy +alF alX alK');

['windows', 'edge', 'explorer', 'store', 'whatsapp', 'chrome', 'logo', 'pinwheel', 'recorder'].forEach(name => {
    addButton(document.getElementById('apps'), name, name === 'logo' ? 'current' : '');
});

document.querySelectorAll('[data-icon]').forEach(el => {
    el.innerHTML = drawIcon(el.dataset.icon);
});

// raw board edges are marked with a zigzag between two parallel lines
function zigzag(x1, y1, x2, y2, dx, dy, n, opacity) {
    let points = '';
    for (let i = 0; i <= n; i++) {
        const t = i / n;
        const side = i % 2;
        points += Math.round(x1 + (x2 - x1) * t + dx * side) + ',' + Math.round(y1 + (y2 - y1) * t + dy * side) + ' ';
    }
    return '<polyline points="' + points + '" opacity="' + opacity + '"/>';
}

document.getElementById('edges').innerHTML =
    zigzag(464, 230, 474, 512, 7, 0, 38, .5) +
    zigzag(704, 240, 703, 490, 7, 0, 32, .5) +
    zigzag(486, 517, 700, 550, 0, -6, 36, .5) +
    zigzag(482, 474, 696, 508, 0, 5, 40, .3);

// connecting bolts
const bolts = [[560, 423], [551, 428], [534, 441], [525, 446], [499, 465], [489, 470], [557, 459], [534, 478], [530, 483], [499, 502], [491, 508],
    [710, 493], [703, 499], [706, 534], [710, 541], [731, 466], [728, 472], [750, 443], [752, 450], [751, 477], [745, 484], [732, 496], [728, 509], [725, 515]];
document.getElementById('bolts').innerHTML = bolts.map(([x, y]) =>
    '<path d="M' + (x - 8) + ' ' + y + 'l14 2M' + (x - 2) + ' ' + (y - 2) + 'l11 1" stroke="#271087" stroke-width="2" opacity=".65"/>').join('') +
    '<path d="M564 420h6v4h-6zM534 440h7v5h-7zM499 464h5v5h-5zM500 504h6v6h-6zM691 491h6v9h-6zM690 534h6v9h-6z" fill="#31207a" opacity=".85"/>';

const handles = [[461, 220], [582, 226], [715, 233], [466, 374], [712, 400], [472, 518], [585, 537], [709, 556]];
document.getElementById('handles').innerHTML = handles.map(([x, y]) =>
    '<rect x="' + (x - 2) + '" y="' + (y - 2) + '" width="5" height="5"/>').join('');
```
